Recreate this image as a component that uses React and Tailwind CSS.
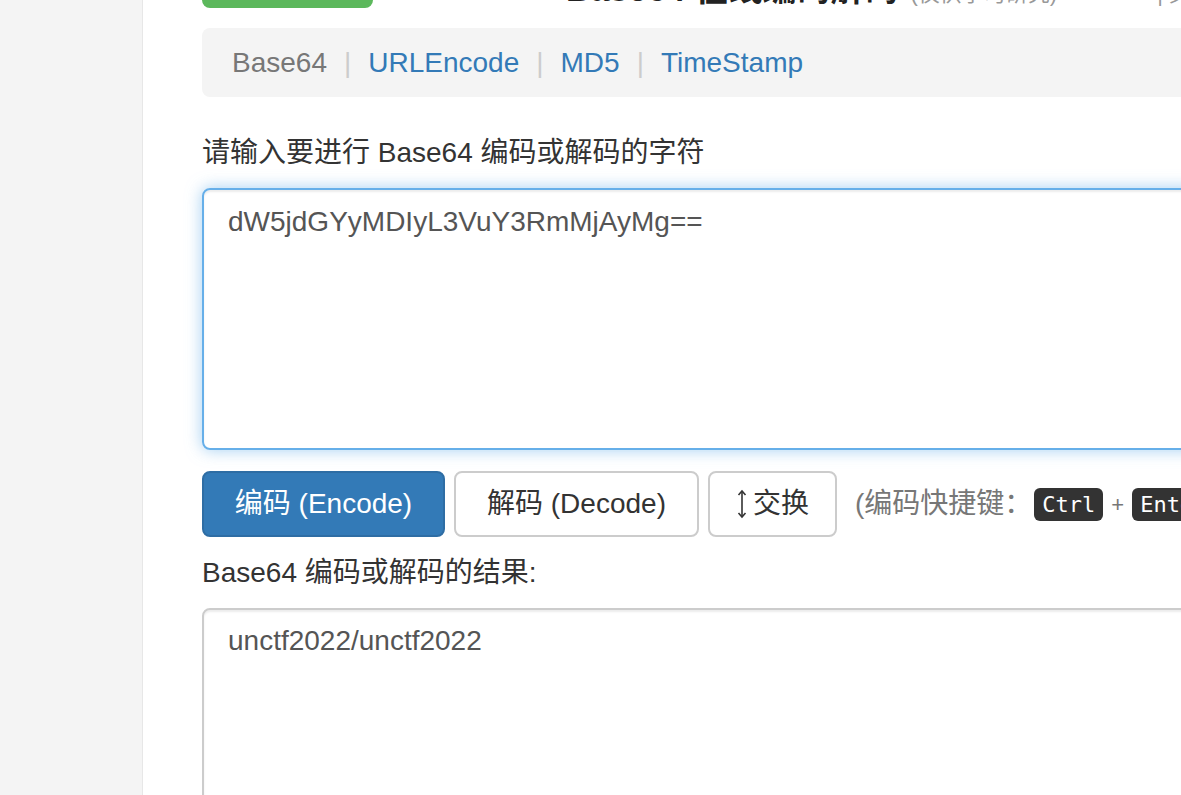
import React from "react";

function SwapIcon() {
  return (
    <svg width="12" height="32" viewBox="0 0 12 32" className="mr-[5px]" aria-hidden="true">
      <path d="M6 3 L6 29" stroke="#333" strokeWidth="1.6" fill="none" />
      <path d="M2.5 7 L6 3 L9.5 7" stroke="#333" strokeWidth="1.6" fill="none" />
      <path d="M2.5 25 L6 29 L9.5 25" stroke="#333" strokeWidth="1.6" fill="none" />
    </svg>
  );
}

export default function App() {
  const sep = <span className="px-[17px] text-[#cccccc]">|</span>;
  return (
    <div className="flex h-[795px] w-[1181px] overflow-hidden bg-white font-['Liberation_Sans','Noto_Sans_CJK_SC',sans-serif] text-[#333]">
      <aside className="w-[143px] shrink-0 border-r border-[#e7e7e7] bg-[#f4f4f4]" />
      <main className="min-w-0 flex-1 pl-[59px]">
        <div className="w-[1120px]">
          {/* header row, mostly scrolled off the top */}
          <div className="-mt-[40px] flex h-[48px] items-end">
            <div className="h-[48px] w-[171px] rounded-[8px] bg-[#5cb85c]" />
            <div className="mb-[2px] ml-[193px] flex items-baseline whitespace-nowrap leading-none">
              <span className="text-[34px] font-bold text-[#222]">Base64 在线编码解码</span>
              <span className="ml-[12px] text-[22px] text-[#999]">(仅供学习研究)</span>
              <span className="ml-[100px] text-[22px] text-[#999]">| 其他工具</span>
            </div>
          </div>

          {/* nav */}
          <div className="mt-[20px] flex h-[69px] items-center rounded-[8px] bg-[#f4f4f4] px-[30px] text-[28px] leading-none">
            <span className="text-[#777]">Base64</span>
            {sep}
            <span className="text-[#337ab7]">URLEncode</span>
            {sep}
            <span className="text-[#337ab7]">MD5</span>
            {sep}
            <span className="text-[#337ab7]">TimeStamp</span>
          </div>

          <div className="mt-[36px] h-[40px] text-[28px] leading-[40px] text-[#333]">
            请输入要进行 Base64 编码或解码的字符
          </div>

          <textarea
            readOnly
            value="dW5jdGYyMDIyL3VuY3RmMjAyMg=="
            className="mt-[15px] block h-[262px] w-full resize-none rounded-[8px] border-2 border-[#66afe9] px-[24px] py-[12px] font-['Liberation_Sans',sans-serif] text-[28px] leading-[40px] text-[#555] shadow-[inset_0_2px_2px_rgba(0,0,0,0.075),0_0_16px_rgba(102,175,233,0.6)] outline-none"
          />

          <div className="mt-[21px] flex items-center whitespace-nowrap">
            <button className="flex h-[66px] w-[243px] items-center justify-center rounded-[8px] border-2 border-[#2e6da4] bg-[#337ab7] text-[28px] text-white">
              编码 (Encode)
            </button>
            <button className="ml-[9px] flex h-[66px] w-[245px] items-center justify-center rounded-[8px] border-2 border-[#cccccc] bg-white text-[28px] text-[#333]">
              解码 (Decode)
            </button>
            <button className="ml-[9px] flex h-[66px] w-[129px] items-center justify-center rounded-[8px] border-2 border-[#cccccc] bg-white text-[28px] text-[#333]">
              <SwapIcon />
              交换
            </button>
            <span className="ml-[18px] text-[28px] text-[#777]">(编码快捷键：</span>
            <kbd className="ml-[2px] flex h-[33px] items-center rounded-[6px] bg-[#333] px-[8px] font-['DejaVu_Sans_Mono',monospace] text-[22px] text-white">
              Ctrl
            </kbd>
            <span className="mx-[8px] text-[22px] text-[#777]">+</span>
            <kbd className="flex h-[33px] items-center rounded-[6px] bg-[#333] px-[8px] font-['DejaVu_Sans_Mono',monospace] text-[22px] text-white">
              Enter
            </kbd>
            <span className="ml-[6px] text-[28px] text-[#777]">)</span>
          </div>

          <div className="mt-[16px] h-[40px] text-[28px] leading-[40px] text-[#333]">
            Base64 编码或解码的结果:
          </div>

          <textarea
            readOnly
            value="unctf2022/unctf2022"
            className="mt-[15px] block h-[262px] w-full resize-none rounded-[8px] border-2 border-[#cccccc] px-[24px] py-[11px] font-['Liberation_Sans',sans-serif] text-[28px] leading-[40px] text-[#555] shadow-[inset_0_2px_2px_rgba(0,0,0,0.075)] outline-none"
          />
        </div>
      </main>
    </div>
  );
}
